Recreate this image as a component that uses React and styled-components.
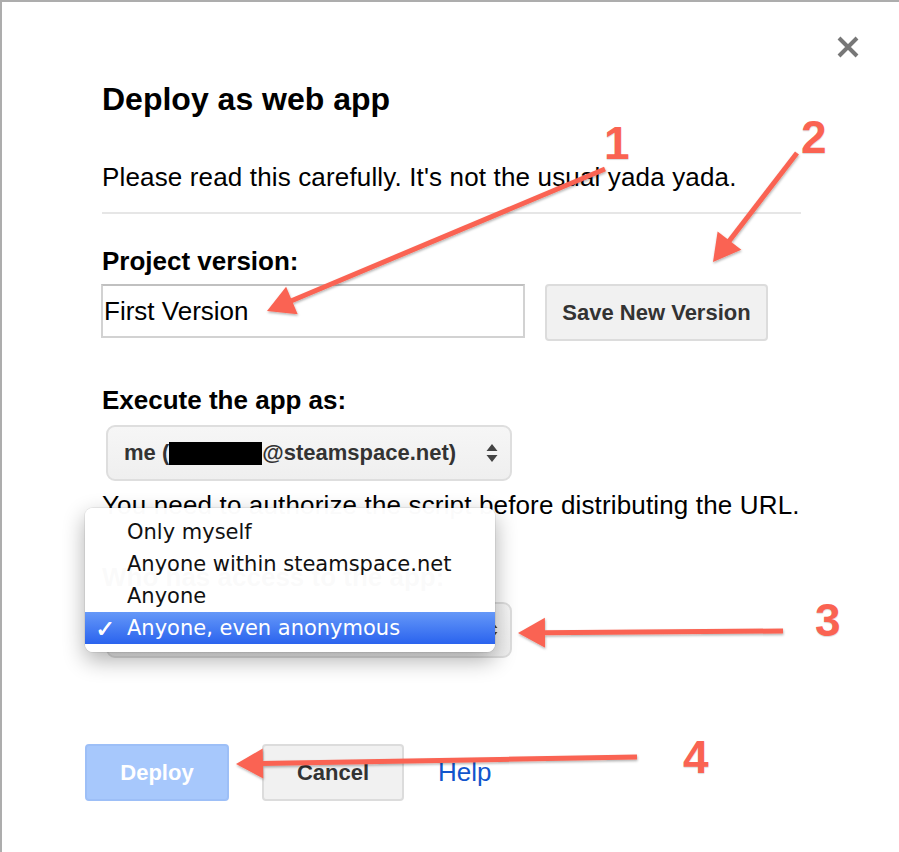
import React from 'react';
import styled, { createGlobalStyle } from 'styled-components';

const GlobalStyle = createGlobalStyle`
  html, body {
    margin: 0;
    padding: 0;
    background: #fff;
  }
  body {
    font-family: "Liberation Sans", Arial, sans-serif;
    color: #000;
  }
`;

const Page = styled.div`
  position: relative;
  box-sizing: border-box;
  width: 899px;
  height: 852px;
  overflow: hidden;
  border-top: 2px solid #adadad;
  border-left: 2px solid #adadad;
`;

const CloseRow = styled.div`
  display: flex;
  justify-content: flex-end;
  padding: 34px 40px 0 0;
`;

const CloseButton = styled.button`
  display: flex;
  width: 22px;
  height: 22px;
  padding: 0;
  border: 0;
  background: none;
  cursor: pointer;
`;

const Content = styled.div`
  width: 700px;
  padding-left: 100px;
`;

const Title = styled.h1`
  margin: 23px 0 0;
  font-size: 32px;
  line-height: 36px;
  font-weight: bold;
`;

const Text = styled.p`
  margin: ${(p) => p.$mt || 0}px 0 0;
  font-size: 26px;
  line-height: 30px;
  letter-spacing: 0.15px;
`;

const Divider = styled.hr`
  margin: 20px 0 0;
  width: 699px;
  height: 2px;
  border: 0;
  background: #e6e6e6;
`;

const Label = styled.div`
  margin-top: ${(p) => p.$mt}px;
  font-size: 26px;
  line-height: 30px;
  font-weight: bold;
`;

const VersionRow = styled.div`
  display: flex;
  align-items: flex-start;
  gap: 20px;
  margin: 8px 0 0 -1px;
`;

const TextInput = styled.input`
  box-sizing: border-box;
  width: 424px;
  height: 54px;
  padding: 0 0 0 1px;
  border: 2px solid #d2d2d2;
  border-top-color: #c0c0c0;
  font-family: "Liberation Sans", Arial, sans-serif;
  font-size: 26px;
  color: #000;
  outline: none;
`;

const Button = styled.button`
  box-sizing: border-box;
  width: ${(p) => p.$w}px;
  height: 57px;
  border-radius: 4px;
  border: 2px solid ${(p) => (p.$primary ? '#9dbff7' : '#dcdcdc')};
  background: ${(p) => (p.$primary ? '#a7c8fc' : '#f1f1f1')};
  color: ${(p) => (p.$primary ? '#fff' : '#333')};
  font-family: "Liberation Sans", Arial, sans-serif;
  font-size: 22px;
  font-weight: bold;
  cursor: pointer;
`;

const Select = styled.div`
  box-sizing: border-box;
  display: flex;
  align-items: center;
  justify-content: space-between;
  width: 406px;
  height: 56px;
  margin: 10px 0 0 4px;
  padding: 0 12px 0 16px;
  border: 2px solid #dedede;
  border-radius: 9px;
  background: linear-gradient(#f6f6f6, #efefef);
  color: #333;
  font-size: 22px;
  font-weight: bold;
`;

const SelectValue = styled.span`
  display: flex;
  align-items: center;
  white-space: nowrap;
`;

const Redacted = styled.span`
  display: inline-block;
  width: 93px;
  height: 23px;
  margin-top: 1px;
  background: #000;
`;

const Footer = styled.div`
  display: flex;
  align-items: center;
  margin: 86px 0 0 -17px;
`;

const ButtonGroup = styled.div`
  display: flex;
  gap: 33px;
`;

const HelpLink = styled.a`
  margin: 0 0 0 34px;
  font-size: 26px;
  color: #1155cc;
  text-decoration: none;
`;

const Menu = styled.ul`
  position: absolute;
  left: 83px;
  top: 506px;
  box-sizing: border-box;
  width: 410px;
  margin: 0;
  padding: 8px 0;
  list-style: none;
  background: rgba(255, 255, 255, 0.98);
  border-radius: 8px;
  box-shadow: 0 8px 22px rgba(0, 0, 0, 0.32), 0 0 0 1px rgba(0, 0, 0, 0.06);
`;

const MenuItem = styled.li`
  position: relative;
  height: 32px;
  padding-left: 42px;
  font-family: "DejaVu Sans", "Lucida Grande", sans-serif;
  font-size: 21px;
  line-height: 32px;
  color: ${(p) => (p.$active ? '#fff' : '#111')};
  background: ${(p) => (p.$active ? 'linear-gradient(#6598f8, #2a63ee)' : 'transparent')};
`;

const Check = styled.span`
  position: absolute;
  left: 10px;
  top: 1px;
  font-size: 24px;
  font-weight: bold;
  text-shadow: 0.6px 0 0 #fff;
`;

const Annotations = styled.svg`
  position: absolute;
  left: -2px;
  top: -2px;
  pointer-events: none;
`;

const Marker = styled.span`
  position: absolute;
  left: ${(p) => p.$x - 2}px;
  top: ${(p) => p.$y - 2}px;
  font-family: "Liberation Sans", Arial, sans-serif;
  font-size: 46px;
  line-height: 46px;
  font-weight: bold;
  color: #fa6352;
  text-shadow: 0 1px 1px rgba(0, 0, 0, 0.15);
`;

const arrows = [
  { from: [605, 169], to: [267, 311] },
  { from: [797, 153], to: [713, 262] },
  { from: [783, 631], to: [518, 633] },
  { from: [637, 757], to: [236, 764] },
];

const markers = [
  { n: '1', x: 604, y: 120 },
  { n: '2', x: 801, y: 114 },
  { n: '3', x: 815, y: 597 },
  { n: '4', x: 683, y: 734 },
];

function Arrow({ from, to }) {
  const [sx, sy] = from;
  const [tx, ty] = to;
  const len = Math.hypot(tx - sx, ty - sy);
  const ux = (tx - sx) / len;
  const uy = (ty - sy) / len;
  const head = 27;
  const half = 15;
  const bx = tx - ux * head;
  const by = ty - uy * head;
  const pts = [
    [tx, ty],
    [bx - uy * half, by + ux * half],
    [bx + uy * half, by - ux * half],
  ];
  return (
    <g filter="url(#drop)">
      <line x1={sx} y1={sy} x2={bx + ux * 3} y2={by + uy * 3} stroke="#fa6352" strokeWidth="5" />
      <polygon points={pts.map((p) => p.join(',')).join(' ')} fill="#fa6352" />
    </g>
  );
}

const UpDown = () => (
  <svg width="12" height="20" viewBox="0 0 12 20">
    <path d="M6 1 L11.5 8 H0.5 Z M6 19 L11.5 12 H0.5 Z" fill="#444" />
  </svg>
);

const options = ['Only myself', 'Anyone within steamspace.net', 'Anyone', 'Anyone, even anonymous'];

export default function App() {
  return (
    <>
      <GlobalStyle />
      <Page>
        <CloseRow>
          <CloseButton aria-label="Close">
            <svg width="22" height="22" viewBox="0 0 22 22">
              <path d="M2 2 L20 20 M20 2 L2 20" stroke="#777" strokeWidth="4" />
            </svg>
          </CloseButton>
        </CloseRow>
        <Content>
          <Title>Deploy as web app</Title>
          <Text $mt={45}>Please read this carefully. It's not the usual yada yada.</Text>
          <Divider />

          <Label $mt={32}>Project version:</Label>
          <VersionRow>
            <TextInput defaultValue="First Version" />
            <Button $w={223}>Save New Version</Button>
          </VersionRow>

          <Label $mt={44}>Execute the app as:</Label>
          <Select>
            <SelectValue>
              me (<Redacted />@steamspace.net)
            </SelectValue>
            <UpDown />
          </Select>
          <Text $mt={9}>You need to authorize the script before distributing the URL.</Text>

          <Label $mt={42}>Who has access to the app:</Label>
          <Select>
            <SelectValue>Anyone, even anonymous</SelectValue>
            <UpDown />
          </Select>

          <Footer>
            <ButtonGroup>
              <Button $primary $w={144}>Deploy</Button>
              <Button $w={142}>Cancel</Button>
            </ButtonGroup>
            <HelpLink href="#">Help</HelpLink>
          </Footer>
        </Content>

        <Menu>
          {options.map((o, i) => (
            <MenuItem key={o} $active={i === options.length - 1}>
              {i === options.length - 1 && <Check>✓</Check>}
              {o}
            </MenuItem>
          ))}
        </Menu>

        <Annotations width="899" height="852" viewBox="0 0 899 852">
          <defs>
            <filter id="drop" x="-10%" y="-10%" width="120%" height="140%">
              <feDropShadow dx="0.5" dy="1.5" stdDeviation="1" floodColor="#000" floodOpacity="0.3" />
            </filter>
          </defs>
          {arrows.map((a, i) => (
            <Arrow key={i} {...a} />
          ))}
        </Annotations>
        {markers.map((m) => (
          <Marker key={m.n} $x={m.x} $y={m.y}>{m.n}</Marker>
        ))}
      </Page>
    </>
  );
}
